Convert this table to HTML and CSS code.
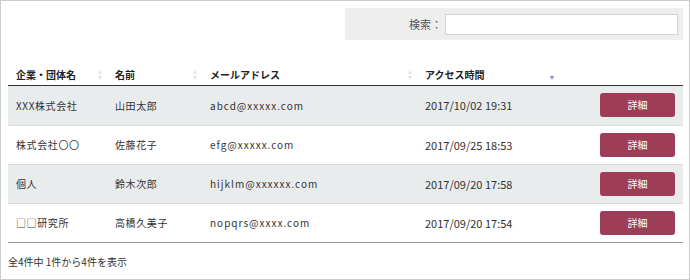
FILE: index.html
```html
<!DOCTYPE html>
<html>

<head>
    <meta charset="utf-8" />
    <title>アクセス一覧</title>
    <link rel="stylesheet" href="styles.css">
</head>

<body>
    <div class="panel">
        <div class="search">
            <label for="q">検索：</label>
            <input type="text" id="q" />
        </div>

        <table class="list">
            <colgroup>
                <col class="c1" />
                <col class="c2" />
                <col class="c3" />
                <col class="c4" />
                <col class="c5" />
            </colgroup>
            <thead>
                <tr>
                    <th><span class="head">企業・団体名<i class="sort"></i></span></th>
                    <th><span class="head">名前<i class="sort"></i></span></th>
                    <th><span class="head">メールアドレス<i class="sort"></i></span></th>
                    <th><span class="head">アクセス時間<i class="sort desc"></i></span></th>
                    <th></th>
                </tr>
            </thead>
            <tbody>
                <tr class="odd">
                    <td>XXX株式会社</td>
                    <td>山田太郎</td>
                    <td class="mail">abcd@xxxxx.com</td>
                    <td class="time">2017/10/02 19:31</td>
                    <td class="act"><a href="#" class="btn">詳細</a></td>
                </tr>
                <tr>
                    <td>株式会社〇〇</td>
                    <td>佐藤花子</td>
                    <td class="mail">efg@xxxxx.com</td>
                    <td class="time">2017/09/25 18:53</td>
                    <td class="act"><a href="#" class="btn">詳細</a></td>
                </tr>
                <tr class="odd">
                    <td>個人</td>
                    <td>鈴木次郎</td>
                    <td class="mail">hijklm@xxxxxx.com</td>
                    <td class="time">2017/09/20 17:58</td>
                    <td class="act"><a href="#" class="btn">詳細</a></td>
                </tr>
                <tr>
                    <td>□□研究所</td>
                    <td>高橋久美子</td>
                    <td class="mail">nopqrs@xxxx.com</td>
                    <td class="time">2017/09/20 17:54</td>
                    <td class="act"><a href="#" class="btn">詳細</a></td>
                </tr>
            </tbody>
        </table>

        <p class="info">全4件中 1件から4件を表示</p>
    </div>
</body>

</html>
```

FILE: styles.css
```css
* {
    margin: 0;
    padding: 0;
    box-sizing: border-box;
}

body {
    font-family: "Noto Sans CJK JP", "DejaVu Sans", sans-serif;
    font-size: 10px;
    color: #333;
    background: #fff;
}

.panel {
    width: 690px;
    height: 280px;
    border: 1px solid #ccc;
    padding: 7px 6px 0 7px;
}

/* 検索ボックス */
.search {
    margin-left: 337px;
    height: 32px;
    background: #eee;
    display: flex;
    align-items: center;
    justify-content: flex-end;
    padding-right: 5px;
    color: #555;
    font-size: 11px;
}

.search label {
    margin-right: 3px;
}

.search input {
    width: 233px;
    height: 21px;
    border: 1px solid #d4d4d4;
    background: #fff;
}

/* 一覧 */
.list {
    width: 675px;
    margin-top: 20px;
    border-collapse: collapse;
    table-layout: fixed;
}

.c1 { width: 99px; }
.c2 { width: 95px; }
.c3 { width: 215px; }
.c4 { width: 142px; }
.c5 { width: 124px; }

.list th {
    height: 25px;
    text-align: left;
    font-weight: bold;
    color: #222;
    padding: 0 0 0 8px;
    border-bottom: 1px solid #333;
    vertical-align: bottom;
}

.list th .head {
    display: flex;
    justify-content: space-between;
    align-items: center;
    height: 20px;
    padding-right: 4px;
}

/* ソートの矢印 */
.sort {
    width: 5px;
    height: 10px;
    display: inline-block;
    position: relative;
}

.sort::before,
.sort::after {
    content: "";
    position: absolute;
    left: 0;
    border-left: 2.5px solid transparent;
    border-right: 2.5px solid transparent;
}

.sort::before {
    top: 0;
    border-bottom: 4px solid #e4e4e4;
}

.sort::after {
    bottom: 0;
    border-top: 4px solid #e4e4e4;
}

.sort.desc::before {
    display: none;
}

.sort.desc::after {
    border-top-color: #7f8ad6;
}

.list td {
    height: 39px;
    padding: 0 0 0 8px;
    letter-spacing: 0.6px;
    border-top: 1px solid #dcdcdc;
    white-space: nowrap;
}

.list tbody tr:first-child td {
    border-top: none;
    height: 40px;
}

.list tbody tr:last-child td {
    border-bottom: 1px solid #999;
}

.list tr.odd td {
    background: #e9eced;
}

.list td.mail {
    letter-spacing: 1px;
}

.list td.time {
    letter-spacing: 0;
    font-size: 11px;
}

.list td.act {
    text-align: right;
    padding-right: 8px;
}

.btn {
    display: inline-block;
    width: 75px;
    height: 24px;
    line-height: 24px;
    text-align: center;
    border-radius: 3px;
    background: #9e3d58;
    color: #fff;
    text-decoration: none;
    letter-spacing: 0;
}

.info {
    margin-top: 11px;
    font-size: 10px;
    color: #333;
}
```
